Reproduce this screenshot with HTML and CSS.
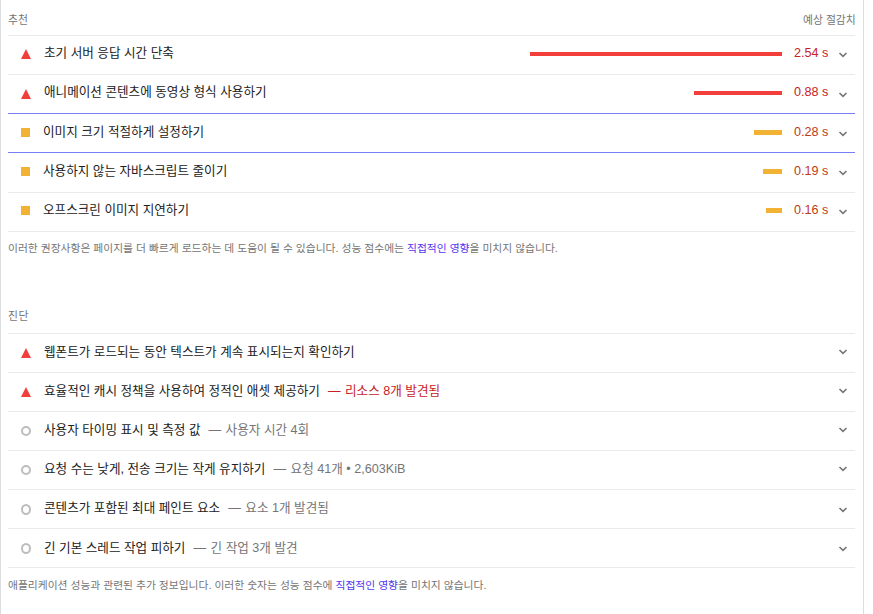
FILE: index.html
```html
<!DOCTYPE html>
<html lang="ko">
<head>
<meta charset="utf-8">
<title>성능 보고서</title>
<link rel="stylesheet" href="styles.css">
</head>
<body>
<main class="report">
  <section class="opportunities">
    <header class="group-header"><span>추천</span><span>예상 절감치</span></header>
    <div class="audit fail first"><svg class="marker" viewBox="0 0 10 10"><path d="M5 0 10 10H0z"/></svg><span class="title">초기 서버 응답 시간 단축</span><span class="bar" style="width:252px"></span><span class="saving">2.54 s</span><svg class="chevron" viewBox="0 0 10 6"><path d="M1.5 1 5 4.3 8.5 1"/></svg></div>
    <div class="audit fail"><svg class="marker" viewBox="0 0 10 10"><path d="M5 0 10 10H0z"/></svg><span class="title">애니메이션 콘텐츠에 동영상 형식 사용하기</span><span class="bar" style="width:88px"></span><span class="saving">0.88 s</span><svg class="chevron" viewBox="0 0 10 6"><path d="M1.5 1 5 4.3 8.5 1"/></svg></div>
    <div class="audit average focused"><span class="marker"></span><span class="title">이미지 크기 적절하게 설정하기</span><span class="bar" style="width:28px"></span><span class="saving">0.28 s</span><svg class="chevron" viewBox="0 0 10 6"><path d="M1.5 1 5 4.3 8.5 1"/></svg></div>
    <div class="audit average after-focus"><span class="marker"></span><span class="title">사용하지 않는 자바스크립트 줄이기</span><span class="bar" style="width:19px"></span><span class="saving">0.19 s</span><svg class="chevron" viewBox="0 0 10 6"><path d="M1.5 1 5 4.3 8.5 1"/></svg></div>
    <div class="audit average last"><span class="marker"></span><span class="title">오프스크린 이미지 지연하기</span><span class="bar" style="width:16px"></span><span class="saving">0.16 s</span><svg class="chevron" viewBox="0 0 10 6"><path d="M1.5 1 5 4.3 8.5 1"/></svg></div>
    <p class="note">이러한 권장사항은 페이지를 더 빠르게 로드하는 데 도움이 될 수 있습니다. 성능 점수에는 <a>직접적인 영향</a>을 미치지 않습니다.</p>
  </section>
  <section class="diagnostics">
    <header class="group-header"><span>진단</span></header>
    <div class="audit fail"><svg class="marker" viewBox="0 0 10 10"><path d="M5 0 10 10H0z"/></svg><span class="title">웹폰트가 로드되는 동안 텍스트가 계속 표시되는지 확인하기</span><svg class="chevron" viewBox="0 0 10 6"><path d="M1.5 1 5 4.3 8.5 1"/></svg></div>
    <div class="audit fail"><svg class="marker" viewBox="0 0 10 10"><path d="M5 0 10 10H0z"/></svg><span class="title">효율적인 캐시 정책을 사용하여 정적인 애셋 제공하기<span class="detail"><span class="dash">—</span> 리소스 8개 발견됨</span></span><svg class="chevron" viewBox="0 0 10 6"><path d="M1.5 1 5 4.3 8.5 1"/></svg></div>
    <div class="audit info"><span class="marker"></span><span class="title">사용자 타이밍 표시 및 측정 값<span class="detail"><span class="dash">—</span> 사용자 시간 4회</span></span><svg class="chevron" viewBox="0 0 10 6"><path d="M1.5 1 5 4.3 8.5 1"/></svg></div>
    <div class="audit info"><span class="marker"></span><span class="title">요청 수는 낮게, 전송 크기는 작게 유지하기<span class="detail"><span class="dash">—</span> 요청 41개 • 2,603KiB</span></span><svg class="chevron" viewBox="0 0 10 6"><path d="M1.5 1 5 4.3 8.5 1"/></svg></div>
    <div class="audit info lower"><span class="marker"></span><span class="title">콘텐츠가 포함된 최대 페인트 요소<span class="detail"><span class="dash">—</span> 요소 1개 발견됨</span></span><svg class="chevron" viewBox="0 0 10 6"><path d="M1.5 1 5 4.3 8.5 1"/></svg></div>
    <div class="audit info lower last"><span class="marker"></span><span class="title">긴 기본 스레드 작업 피하기<span class="detail"><span class="dash">—</span> 긴 작업 3개 발견</span></span><svg class="chevron" viewBox="0 0 10 6"><path d="M1.5 1 5 4.3 8.5 1"/></svg></div>
    <p class="note">애플리케이션 성능과 관련된 추가 정보입니다. 이러한 숫자는 성능 점수에 <a>직접적인 영향</a>을 미치지 않습니다.</p>
  </section>
</main>
</body>
</html>
```
FILE: styles.css
```css
* { box-sizing: border-box; }
body {
  margin: 0;
  background: #fff;
  color: #212121;
  font: 12.6px/18px "Liberation Sans", "Noto Sans CJK KR", sans-serif;
}
.report {
  width: 864px;
  height: 614px;
  padding: 0 8px 0 7px;
  border-left: 1px solid #dadce0;
  border-right: 1px solid #dadce0;
  overflow: hidden;
}
.group-header {
  display: flex;
  justify-content: space-between;
  height: 36px;
  padding-top: 11px;
  border-bottom: 1px solid #ebebeb;
  color: #757575;
  font-size: 10.8px;
}
.group-header span + span { margin-right: -0.7px; }
.opportunities { height: 298px; }
.diagnostics .group-header { padding-top: 9px; letter-spacing: 0.5px; }
.audit {
  display: flex;
  align-items: flex-start;
  height: 39px;
  padding: 0 7px 0 13px;
  border-bottom: 1px solid #ebebeb;
}
.marker { flex: none; width: 10px; height: 10px; margin-top: 14px; }
.first .marker { margin-top: 13px; }
.fail .marker { fill: #f33f3b; }
.average .marker { width: 9px; height: 9px; background: #f2b233; }
.info .marker { border: 2px solid #bdbdbd; border-radius: 50%; }
.info.lower .marker { height: 11px; }
.title { flex: 1; margin: 8px 0 0 13px; white-space: nowrap; }
.detail { margin-left: 8px; color: #757575; }
.dash { margin-right: 1px; }
.fail .detail { color: #c7221f; }
.bar { height: 4px; margin: 16px 12px 0 0; background: #f33f3b; }
.average .bar { height: 5px; background: #f2b233; }
.saving { width: 35px; margin-top: 8px; color: #c7221f; white-space: nowrap; }
.average .saving { color: #bd3b16; }
.chevron {
  flex: none;
  width: 10px;
  height: 6px;
  margin: 16.5px 0 0 9px;
  fill: none;
  stroke: #757575;
  stroke-width: 1.6;
}
.first .chevron,
.opportunities .last .chevron,
.diagnostics .chevron { margin-top: 16px; }
.diagnostics .chevron { margin-top: 15.4px; }
.diagnostics .lower .chevron { margin-top: 16.5px; }
.audit:has(+ .focused), .focused { border-bottom-color: #757ff2; }
.focused .title, .focused .saving,
.after-focus .title, .after-focus .saving,
.diagnostics .title { margin-top: 9px; }
.after-focus { height: 40px; }
.opportunities .last .marker { margin-top: 13px; }
.opportunities .last .bar { margin-top: 15px; }
.diagnostics .last .title { margin-top: 10px; }
.note { margin: 8px 0 0; color: #757575; font-size: 10.79px; }
.opportunities .note { margin-top: 7px; }
.note a { color: #5335f0; }
```
